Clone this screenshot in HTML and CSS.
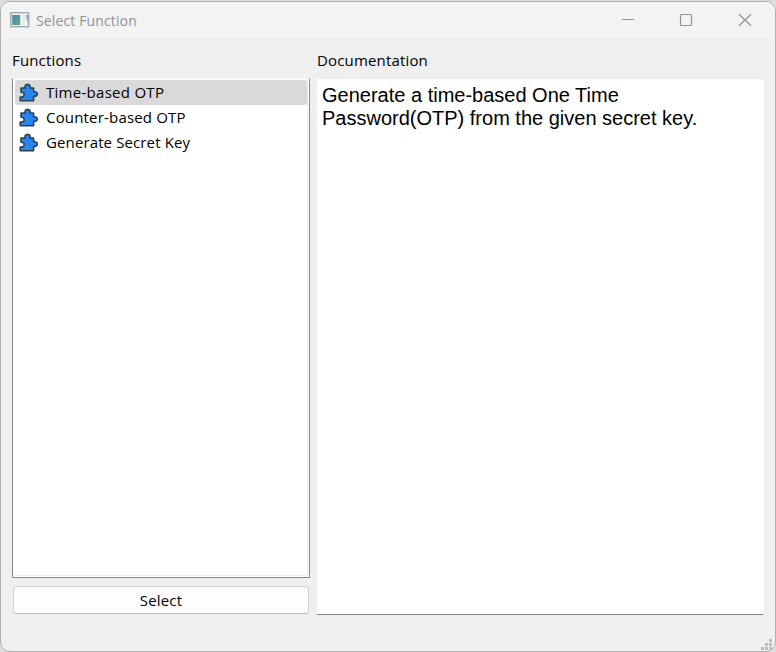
FILE: index.html
```html
<!DOCTYPE html>
<html lang="en">
<head>
<meta charset="utf-8">
<title>Select Function</title>
<link rel="stylesheet" href="styles.css">
</head>
<body>
<svg class="defs" width="0" height="0" aria-hidden="true">
  <symbol id="puzzle" viewBox="0 0 20 20">
    <path d="M2 5H6.4C5.3 3.2 6.5 1.4 8.6 1.4S11.8 3.2 10.8 5H14.6V8.8C16.4 8.4 18.4 9.2 18.4 11.1S16.4 13.8 14.6 13.2V17.8H1.2V14C3 14.5 5.2 13.6 5.2 11.5S3.6 9.3 2 9.3Z"/>
  </symbol>
</svg>
<div class="window">
  <header class="titlebar">
    <svg class="app-icon" width="20" height="16" viewBox="0 0 20 16">
      <defs><linearGradient id="pane" x1="0" y1="0" x2="1" y2="1"><stop stop-color="#4b82ad"/><stop offset="1" stop-color="#5dae80"/></linearGradient></defs>
      <rect x=".75" y=".75" width="18" height="14" fill="#f1f3f5" stroke="#9da2ad" stroke-width="1.3"/>
      <rect x="2.2" y="3" width="8" height="10" fill="url(#pane)"/>
      <rect x="12" y="3" width="3" height="10" fill="#e7ebec"/>
      <path d="M16 3h1.6v9z" fill="url(#pane)"/>
    </svg>
    <h1 class="title">Select Function</h1>
    <svg class="controls" width="131" height="14" viewBox="0 0 131 14">
      <path d="M0 6.5h12"/>
      <rect x="58.5" y="1.5" width="11" height="11" rx="1"/>
      <path d="M117 1.2l12 11.6M129 1.2l-12 11.6"/>
    </svg>
  </header>
  <main class="content">
    <section class="functions">
      <h2 class="label">Functions</h2>
      <ul class="list">
        <li class="item selected"><svg class="icon"><use href="#puzzle"/></svg><span class="name-time">Time-based OTP</span></li>
        <li class="item"><svg class="icon"><use href="#puzzle"/></svg><span class="name-counter">Counter-based OTP</span></li>
        <li class="item"><svg class="icon"><use href="#puzzle"/></svg><span class="name-secret">Generate Secret Key</span></li>
      </ul>
      <button class="select">Select</button>
    </section>
    <section class="documentation">
      <h2 class="label">Documentation</h2>
      <div class="doc">Generate a time-based One Time<br>Password(OTP) from the given secret key.</div>
    </section>
  </main>
  <svg class="grip" width="11" height="11" viewBox="0 0 11 11"><path d="M8 0h3v3h-3zM4 4h3v3h-3zM8 4h3v3h-3zM0 8h3v3h-3zM4 8h3v3h-3zM8 8h3v3h-3z"/></svg>
</div>
</body>
</html>
```
FILE: styles.css
```css
* { box-sizing: border-box; }
body { margin: 0; height: 652px; padding-top: 1px; overflow: hidden; background: #dedee0; }
.defs { position: absolute; }
.window {
  position: relative;
  width: 776px;
  height: 651px;
  overflow: hidden;
  border: 1px solid #b0b0b0;
  border-radius: 10px;
  background: #efefef;
  font: 15px/20px "Open Sans", "Noto Sans", sans-serif;
  color: #000;
}
.titlebar { display: flex; align-items: center; height: 37px; padding: 0 22px 0 9px; background: #f3f3f3; }
.app-icon { flex: none; margin-top: -2px; }
.title { margin: 0 0 0 6px; font-size: 14px; font-weight: 400; line-height: 20px; letter-spacing: .13px; color: #929292; white-space: nowrap; }
.controls { margin-left: auto; margin-top: -1px; fill: none; stroke: #929292; stroke-width: 1.2; }
.content { display: flex; gap: 6px; padding: 11px 11px 0 11px; }
.functions { width: 298px; }
.documentation { width: 448px; }
.label { height: 28px; margin: 0; font-size: 15px; font-weight: 400; line-height: 20px; letter-spacing: .16px; }
.documentation .label { padding-left: 1px; }
.list {
  height: 500px;
  margin: 0;
  padding: 1px 2px;
  list-style: none;
  border: 1px solid #828790;
  border-top-color: #f5f5f5;
  background: #fff;
  box-shadow: inset -1px -1px #fff, inset -2px -2px #ececec;
}
.item { display: flex; align-items: center; height: 25px; padding-left: 4px; line-height: 20px; white-space: nowrap; }
.item span { margin: -2px 0 0 7px; }
.name-time { letter-spacing: .28px; }
.name-counter { letter-spacing: .18px; }
.name-secret { letter-spacing: .12px; }
.selected { border-radius: 3px; background: #d9d9d9; }
.icon { width: 20px; height: 20px; fill: #2786f5; stroke: #30414e; stroke-width: 1.6; stroke-linejoin: round; }
.select {
  display: block;
  width: 296px;
  height: 28px;
  margin: 8px 0 0 1px;
  padding: 0;
  border: 1px solid #d0d0d0;
  border-bottom-color: #bcbcbc;
  border-radius: 4px;
  background: #fdfdfd;
  font: inherit;
  color: #000;
  letter-spacing: .2px;
}
.doc {
  height: 537px;
  margin-left: 1px;
  padding: 5px;
  border-top: 1px solid #ebebeb;
  border-right: 1px solid #fafafa;
  border-bottom: 1px solid #828282;
  background: #fff;
  font: 20px/23px "Liberation Sans", Arial, sans-serif;
  white-space: nowrap;
}
.grip { position: absolute; right: 3px; bottom: 1px; fill: #bdbdbd; }
```
